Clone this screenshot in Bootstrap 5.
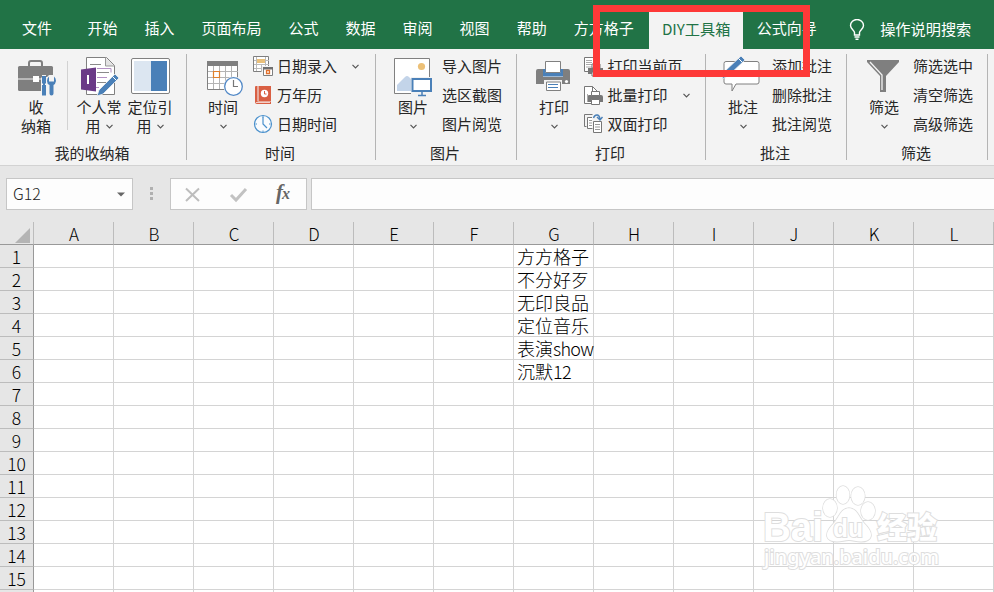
<!DOCTYPE html>
<html lang="zh-CN">
<head>
<meta charset="utf-8">
<meta name="viewport" content="width=device-width, initial-scale=1">
<title>DIY工具箱</title>
<link href="https://cdn.jsdelivr.net/npm/bootstrap@5.3.0/dist/css/bootstrap.min.css" rel="stylesheet">
<style>
body{width:994px;height:592px;overflow:hidden;font-family:"Noto Sans CJK SC",sans-serif;font-size:15px;line-height:19px;color:#262626;background:#e6e6e6;font-weight:400}
.tabbar{height:49px;background:#217346;padding-top:12px;flex-wrap:nowrap}
.tabbar .nav-link{color:#fff;padding:0 13.5px;line-height:32px;height:37px;border-radius:0;white-space:nowrap;font-size:15px}
.tabbar .nav-link.file-tab{padding:0 22px}
.tabbar .nav-link.active{background:#f3f3f3;color:#217346;width:94px;padding:0;text-align:center;margin-left:2px;font-size:15.2px}
.tell-me{color:#fff;margin-left:19px;height:37px}
.tell-me svg{margin-top:7px}
.tell-me span{margin-left:15px;line-height:33px;font-size:15.2px}
.ribbon{height:117px;background:#f3f3f3;border-bottom:1px solid #d2d2d2}
.tool-group{height:106px;margin-top:5px;border-right:1px solid #b4b4b4}
.g-141{width:141px}.g-187{width:187px}.g-189{width:189px}
.tool-body{height:89px}
.g-label{line-height:20px;height:17px;margin-left:-2px}
.big-btn{width:52px;flex:none;text-align:center;margin-left:10px}
.big-btn.wide-gap{margin-left:11px}
.thin-rule + .big-btn,.big-btn + .big-btn{margin-left:-1px}
.big-btn svg{display:block;width:52px;height:43px}
.big-btn span{display:block;white-space:nowrap;line-height:19px}
.chev{width:7px;height:5px;fill:none;stroke:#555;stroke-width:1.2;flex:none}
.big-btn .chev.solo{width:7px;height:5px;margin:8px auto 0}
.big-btn .chev.inl{display:inline-block;width:7px;height:5px;margin-left:5px;vertical-align:3px}
.thin-rule{width:1px;height:69px;background:#d2d2d2;margin:7px 6px 0 5px}
.small-col{margin-top:-2px;margin-left:3px}
.small-btn{height:29px;white-space:nowrap}
.small-btn svg.ic{width:22px;height:29px;flex:none;margin-right:3px}
.print-col .small-btn svg.ic{margin-right:1.5px}
.print-col{margin-left:4px}
.small-btn span{line-height:27px;height:29px}
.small-btn .chev{margin:-1px 0 0 15px}
.formula-row{height:56px;padding:12px 0 0 6px}
.fbox{height:32px;background:#fdfdfd;border:1px solid #c6c6c6}
.name-box{width:127px;padding:0 7px 0 6px;font-size:16px;color:#444}
.name-box span{font-weight:300;color:#222;padding-bottom:2px}
.fx-box{width:137px}
.sheet{table-layout:fixed;width:994px;border-collapse:separate;border-spacing:0;color:#000;background:#fff;font-size:18px}
.sheet th,.sheet td{padding:0;height:23px;line-height:21px;border-right:1px solid #d4d4d4;border-bottom:1px solid #d4d4d4;font-weight:300;white-space:nowrap}
.sheet th{background:#e6e6e6;text-align:center;font-size:17px}
.sheet thead th{border-bottom-color:#999;border-right-color:#bcbcbc;padding-left:1px}
.sheet tbody th{border-right-color:#999;border-bottom-color:#bcbcbc;font-size:17.5px}
.sheet td{padding-left:3px}
.sheet td span{letter-spacing:-.7px}
.row-head{width:34px}
.sheet svg{display:block;margin:4px 0 0 14px}
.highlight-box{position:absolute;left:593px;top:5px;width:217px;height:72px;border:7px solid #fe3938}
.watermark{position:absolute;left:755px;top:480px}
</style>
</head>
<body>
<nav class="nav tabbar">
<a class="nav-link file-tab">文件</a><a class="nav-link">开始</a><a class="nav-link">插入</a><a class="nav-link">页面布局</a><a class="nav-link">公式</a><a class="nav-link">数据</a><a class="nav-link">审阅</a><a class="nav-link">视图</a><a class="nav-link">帮助</a><a class="nav-link">方方格子</a><a class="nav-link active">DIY工具箱</a><a class="nav-link">公式向导</a>
<div class="tell-me d-flex align-items-start"><svg width="16" height="22" viewBox="849 19 16 22" fill="none" stroke="#fff" stroke-width="1.4"><path d="M854.500 35v-2.500c0-2-4-3.500-4-7a6.500 6 0 0 1 13 0c0 3.500-4 5-4 7V35zM854.500 37h5M855.500 39.300h3"/></svg><span>操作说明搜索</span></div>
</nav>

<div class="ribbon d-flex">
 <section class="tool-group g-187">
  <div class="tool-body d-flex">
   <div class="big-btn"><svg viewBox="10 54 52 43"><path d="M29 66v-3q0-2 2-2h9q2 0 2 2v3" fill="none" stroke="#7f7f7f" stroke-width="2"/><rect x="18" y="66" width="35" height="25" rx="1.500" fill="#7f7f7f"/><path d="M18 79h35" stroke="#f3f3f3"/><rect x="33" y="76" width="6" height="6" fill="#fff"/><path d="M41 77.500h1V75h4v2h1l2-2h8v22H41z" fill="#f3f3f3"/><path d="M42 76h4v7l-1 1v1h1v10.500h-4V85h1v-1l-1-1zM49 76.500v5h5v-5q2 1.500 2 4.500-.5 3-2.500 4v8.500q0 2-2 2t-2-2V85q-2.500-1-2.500-4 0-3 2-4.500z" fill="#4a80b8"/></svg><span>收</span><span>纳箱</span></div>
   <div class="thin-rule"></div>
   <div class="big-btn"><svg viewBox="73 54 52 43"><path d="M86.500 57.500h20l8 8v29h-28z" fill="#fff" stroke="#808080"/><path d="M105.500 57.500v8.500h9" fill="#e3e3e3" stroke="#999"/><path d="M90 64.500h11M97 72.500h12M97 82.500h9" stroke="#8a8a8a"/><path d="M97 68.500h14v4M97 77.500h10M90 87.500h9" stroke="#b391c4" fill="none"/><path d="M81 69.500l15-2v24l-15-2z" fill="#6b3a87"/><path d="M88 75v9" stroke="#fff" stroke-width="2"/><path d="M97 96l2-6 16-16 4 4-16 16z" fill="#4a80b8" stroke="#f3f3f3" stroke-width=".8"/><path d="M112.500 76.500l4 4" stroke="#fff"/></svg><span>个人常</span><span>用<svg class="chev inl" viewBox="0 0 7 5"><path d="M.5.8l3 3 3-3"/></svg></span></div>
   <div class="big-btn"><svg viewBox="124 54 52 43"><rect x="131.500" y="58.500" width="38" height="35" rx="1.500" fill="#fff" stroke="#808080"/><path d="M134 61h17v30h-17z" fill="#dce6f1"/><path d="M151 61h16v30h-16z" fill="#4a80b8"/></svg><span>定位引</span><span>用<svg class="chev inl" viewBox="0 0 7 5"><path d="M.5.8l3 3 3-3"/></svg></span></div>
  </div>
  <div class="g-label text-center">我的收纳箱</div>
 </section>

 <section class="tool-group g-189">
  <div class="tool-body d-flex">
   <div class="big-btn"><svg viewBox="197 54 52 43"><path d="M207.500 62h30v27.500h-30z" fill="#fff" stroke="#808080"/><path d="M207 61h31v5h-31z" fill="#7f7f7f"/><path d="M213.500 66v23M219.500 66v23M225.500 66v23M231.500 66v23M208 71.500h30M208 77.500h30M208 83.500h30" stroke="#b4b4b4"/><path d="M213.500 71.500h6v6h-6z" fill="#fff" stroke="#e0812d" stroke-width="1.200"/><circle cx="233.500" cy="86.500" r="10" fill="#f3f3f3"/><circle cx="233.500" cy="86.500" r="8.800" fill="#fff" stroke="#5289c7" stroke-width="1.300"/><path d="M233.500 80v6.500h4.500" fill="none" stroke="#777" stroke-width="1.200"/></svg><span>时间</span><svg class="chev solo" viewBox="0 0 7 5"><path d="M.5.8l3 3 3-3"/></svg></div>
   <div class="small-col">
    <div class="small-btn d-flex align-items-center"><svg class="ic" viewBox="252 52 22 29"><path d="M253.500 56.500h15v15h-15z" fill="#fff" stroke="#7f7f7f"/><path d="M256.500 57v14M261.500 65v7M265.500 57v14M254 60.500h15M254 64.500h15M254 68.500h15" stroke="#bbb"/><path d="M257 59h8v4h-8z" fill="#eac07a"/><path d="M262 66h12v11h-12z" fill="#f3f3f3"/><path d="M263.500 67.500h9v8h-9z" fill="#fff" stroke="#7f7f7f"/><path d="M263 67h10v2.500h-10z" fill="#707070"/><path d="M266.500 70.500h3v3h-3z" fill="none" stroke="#e0702d" stroke-width="1.300"/></svg><span>日期录入</span><svg class="chev" viewBox="0 0 7 5"><path d="M.5.8l3 3 3-3"/></svg></div>
    <div class="small-btn d-flex align-items-center"><svg class="ic" viewBox="252 81 22 29"><path d="M255 87q0-1 1-1h1.500v15.500H271V104h-14q-2 0-2-2z" fill="#d95f43"/><path d="M258.500 86H271v15h-12.500z" fill="#d95f43"/><circle cx="264.500" cy="93.500" r="3.700" fill="#fff"/><path d="M264.500 91v3h2" fill="none" stroke="#d95f43"/><path d="M256 102.500h14" stroke="#fff" stroke-width=".7"/></svg><span>万年历</span></div>
    <div class="small-btn d-flex align-items-center"><svg class="ic" viewBox="252 110 22 29" fill="none"><circle cx="263" cy="124" r="8.500" fill="#f9fbfd" stroke="#4a90cc" stroke-width="1.200"/><path d="M263 117v7l4 4" stroke="#4a90cc" stroke-width="1.200"/><path d="M263 116v1.500M263 130.500v1.500M255.500 124h1.500M269 124h1.500" stroke="#4a90cc"/></svg><span>日期时间</span></div>
   </div>
  </div>
  <div class="g-label text-center">时间</div>
 </section>

 <section class="tool-group g-141">
  <div class="tool-body d-flex">
   <div class="big-btn wide-gap"><svg viewBox="387 54 52 43"><path d="M394.500 58.500h35v35h-35z" fill="#fff" stroke="#808080"/><circle cx="421.500" cy="66.500" r="3.600" fill="#ecc077"/><path d="M397 91v-6l8-8q2-2 4 0l5 5v9z" fill="#c3d4e9"/><path d="M411 77h22v20h-22z" fill="#f3f3f3"/><path d="M412.500 79h18.500v12h-18.500z" fill="#fff" stroke="#4a80b8" stroke-width="2"/><path d="M422 92v3M418 95.500h8" stroke="#4a80b8" stroke-width="1.500"/></svg><span>图片</span><svg class="chev solo" viewBox="0 0 7 5"><path d="M.5.8l3 3 3-3"/></svg></div>
   <div class="small-col"><div class="small-btn d-flex"><span>导入图片</span></div><div class="small-btn d-flex"><span>选区截图</span></div><div class="small-btn d-flex"><span>图片阅览</span></div></div>
  </div>
  <div class="g-label text-center">图片</div>
 </section>

 <section class="tool-group g-189">
  <div class="tool-body d-flex">
   <div class="big-btn wide-gap"><svg viewBox="528 54 52 43"><path d="M545.500 61.500h15v11h-15z" fill="#fff" stroke="#808080"/><path d="M536 71q0-2 2-2h5v8h20v-8h5q2 0 2 2v13h-34z" fill="#7f7f7f"/><path d="M543 69h2.500v4h15v-4h2.500v7.500h-20z" fill="#4a80b8"/><path d="M544 80h18v12h-18z" fill="#f3f3f3"/><path d="M546.500 82h14v8.500h-14z" fill="#fff" stroke="#808080"/><path d="M548 84.500h10M548 87.500h10" stroke="#4a80b8"/><circle cx="566.500" cy="81.500" r="1.600" fill="#fff"/></svg><span>打印</span><svg class="chev solo" viewBox="0 0 7 5"><path d="M.5.8l3 3 3-3"/></svg></div>
   <div class="small-col print-col">
    <div class="small-btn d-flex align-items-center"><svg class="ic" viewBox="584 52 22 29"><path d="M584.500 57.500h9v14h-9zM593 59.500h3v8" fill="#fff" stroke="#777"/><path d="M586 60.500h6M586 62.500h6M586 64.500h6M586 67h6" stroke="#aaa"/><path d="M588 68h15v6h-15z" fill="#777"/><path d="M592 64h8v4h-8zM592 72h7v4h-7z" fill="#fff" stroke="#777"/></svg><span>打印当前页</span></div>
    <div class="small-btn d-flex align-items-center"><svg class="ic" viewBox="584 81 22 29"><path d="M584.500 86.500h8l5 5v12h-13z" fill="#fff" stroke="#777"/><path d="M592.500 86.500v5h5" fill="none" stroke="#777"/><path d="M587.500 94v8" stroke="#aaa"/><path d="M588 96q0-1 1-1h12q2 0 2 2v5h-15z" fill="#777"/><path d="M591.500 91.500h8v4h-8zM591.500 99.500h8v5h-8z" fill="#fff" stroke="#777"/></svg><span>批量打印</span><svg class="chev" viewBox="0 0 7 5"><path d="M.5.8l3 3 3-3"/></svg></div>
    <div class="small-btn d-flex align-items-center"><svg class="ic" viewBox="584 110 22 29"><path d="M586.500 126.500h-2v-12h8" fill="none" stroke="#777"/><path d="M592 117.500h-4.500v11h5M600 120" fill="#fff" stroke="#777"/><path d="M593.500 121.500h8v11h-8z" fill="#fff" stroke="#777"/><path d="M595 124.500h5M595 127h5M595 129.500h5M589 120.500h3M589 123h3M589 125.500h3" stroke="#999"/><path d="M593.500 118q1-3.500 4-3 2 .5 2.500 4M597 117l3 3 2.500-3" fill="none" stroke="#4a80b8" stroke-width="1.400"/></svg><span>双面打印</span></div>
   </div>
  </div>
  <div class="g-label text-center">打印</div>
 </section>

 <section class="tool-group g-141">
  <div class="tool-body d-flex">
   <div class="big-btn wide-gap"><svg viewBox="717 54 52 43"><path d="M726 61.500h31q2 0 2 2V82q0 2-2 2h-21l-4 7v-7h-6q-2 0-2-2V63.500q0-2 2-2z" fill="#fff" stroke="#808080"/><path d="M722 79l2-7 17-16 4 4-17 16z" fill="#4a80b8" stroke="#f3f3f3" stroke-width=".8"/><path d="M738.500 58.500l4 4" stroke="#fff"/></svg><span>批注</span><svg class="chev solo" viewBox="0 0 7 5"><path d="M.5.8l3 3 3-3"/></svg></div>
   <div class="small-col"><div class="small-btn d-flex"><span>添加批注</span></div><div class="small-btn d-flex"><span>删除批注</span></div><div class="small-btn d-flex"><span>批注阅览</span></div></div>
  </div>
  <div class="g-label text-center">批注</div>
 </section>

 <section class="tool-group g-141">
  <div class="tool-body d-flex">
   <div class="big-btn wide-gap"><svg viewBox="858 54 52 43"><path d="M867 60h32v2l-13 14v16h-6V76l-13-14z" fill="#7f7f7f"/><path d="M870 62l12 13v15" fill="none" stroke="#f3f3f3" stroke-width="1.300"/></svg><span>筛选</span><svg class="chev solo" viewBox="0 0 7 5"><path d="M.5.8l3 3 3-3"/></svg></div>
   <div class="small-col"><div class="small-btn d-flex"><span>筛选选中</span></div><div class="small-btn d-flex"><span>清空筛选</span></div><div class="small-btn d-flex"><span>高级筛选</span></div></div>
  </div>
  <div class="g-label text-center">筛选</div>
 </section>
</div>

<div class="formula-row d-flex">
 <div class="fbox name-box d-flex align-items-center justify-content-between"><span>G12</span><svg width="8" height="5" viewBox="0 0 8 5"><path d="M0 .5h8l-4 4z" fill="#666"/></svg></div>
 <svg width="37" height="32" viewBox="133 178 37 32" fill="#b0b0b0"><path d="M150 187h3v3h-3zM150 192h3v3h-3zM150 197h3v3h-3z"/></svg>
 <div class="fbox fx-box"><svg class="d-block" width="135" height="30" viewBox="171 179 135 30"><path d="M186 188.500l13 12.500M199 188.500L186 201" stroke="#bdbdbd" stroke-width="2" fill="none"/><path d="M231 195l5 5 10-11" stroke="#c2c2c2" stroke-width="3" fill="none"/><g font-family="Liberation Serif, serif" font-style="italic" font-weight="bold" fill="#666"><text x="276" y="199" font-size="21">f<tspan dx="-1" font-size="16">x</tspan></text></g></svg></div>
 <div class="fbox flex-grow-1 border-end-0 ms-1"></div>
</div>

<table class="sheet"><colgroup><col class="row-head"></colgroup><thead><tr id="letters"><th><svg width="15" height="15"><path d="M15 0v15H0z" fill="#b4b4b4"/></svg></th></tr></thead><tbody id="cells"></tbody></table>

<div class="highlight-box"></div>
<svg class="watermark" width="195" height="100" viewBox="755 480 195 100" fill="#fff" stroke="#dedede" stroke-width="2" paint-order="stroke">
 <text x="763" y="541" font-family="Liberation Sans, sans-serif" font-weight="bold" font-size="41" textLength="60" lengthAdjust="spacingAndGlyphs">Bai</text>
 <g stroke-width="1.500"><ellipse cx="843" cy="495" rx="6.500" ry="9"/><ellipse cx="858" cy="496" rx="6.800" ry="9"/><ellipse cx="830" cy="508" rx="7" ry="9"/><ellipse cx="868" cy="511" rx="7" ry="9"/><path d="M849 518c8 0 10 7 15 11 11 8 7 13-3 13-5 0-8-1-12-1s-7 1-12 1c-10 0-14-5-3-13 5-4 7-11 15-11z" transform="matrix(1.020 0 0 1.380 -17 -206.500)"/></g>
 <text x="833" y="537" font-family="Liberation Sans, sans-serif" font-weight="bold" font-size="25" textLength="30" lengthAdjust="spacingAndGlyphs">du</text>
 <text x="877" y="538" font-family="Noto Sans CJK SC, sans-serif" font-weight="900" font-size="30" textLength="60">经验</text>
 <text x="764" y="564" font-family="Noto Sans, sans-serif" font-weight="500" font-size="20" textLength="175" lengthAdjust="spacingAndGlyphs">jingyan.baidu.com</text>
</svg>
<script>
const letters = [...'ABCDEFGHIJKL'];
const entries = ['方方格子','不分好歹','无印良品','定位音乐','表演<span>show</span>','沉默<span>12</span>'];
document.getElementById('letters').insertAdjacentHTML('beforeend', letters.map(c => `<th>${c}</th>`).join(''));
document.getElementById('cells').innerHTML = Array.from({length:16}, (_, r) =>
  `<tr><th>${r < 15 ? r + 1 : ''}</th>${letters.map(c => `<td>${c === 'G' ? entries[r] || '' : ''}</td>`).join('')}</tr>`).join('');
</script>
<script src="https://cdn.jsdelivr.net/npm/bootstrap@5.3.0/dist/js/bootstrap.bundle.min.js"></script>
</body>
</html>
